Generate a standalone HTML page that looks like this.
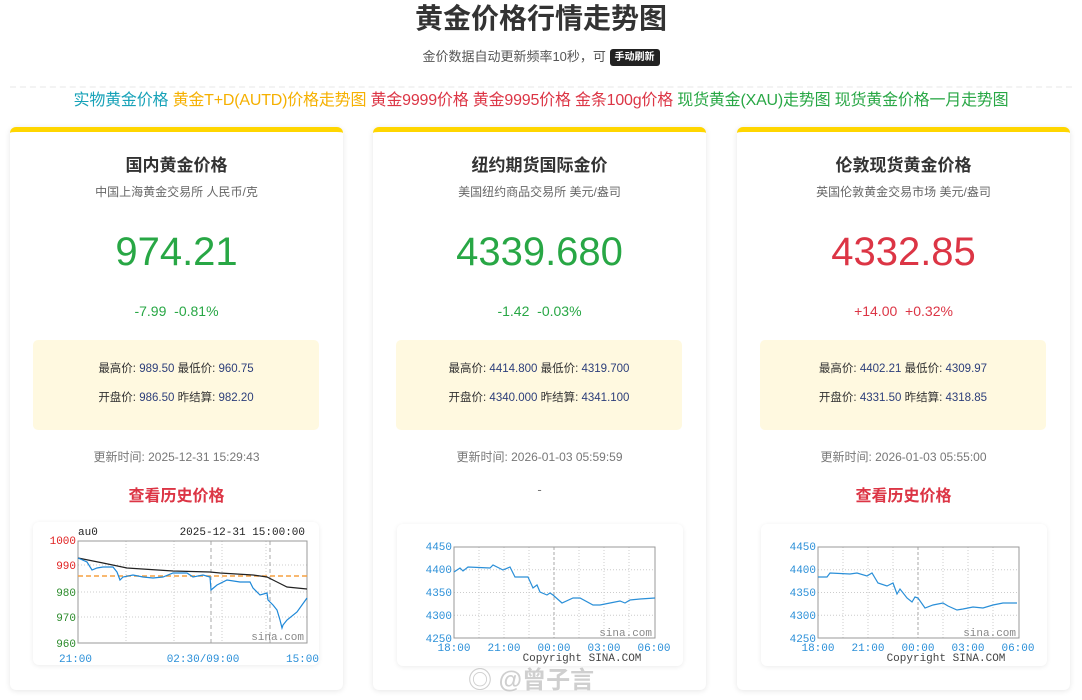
<!DOCTYPE html>
<html><head><meta charset="utf-8">
<style>
*{margin:0;padding:0;box-sizing:border-box}
body{width:1082px;height:700px;overflow:hidden;background:#fff;font-family:"Liberation Sans","Noto Sans CJK SC",sans-serif;color:#333;position:relative}
.a{position:absolute}
.c{text-align:center}
h1{position:absolute;left:0;width:1082px;top:0px;text-align:center;font-size:28px;font-weight:bold;color:#333;line-height:38px}
.sub{top:48px;left:0;width:1082px;font-size:13px;color:#555;line-height:18px}
.btn{display:inline-block;background:#222;color:#fff;font-size:10px;font-weight:bold;padding:1px 5px;border-radius:3px;line-height:15px;vertical-align:middle}
.sep{top:86px;left:10px;width:1062px;border-top:2px dashed #f3f3f3}
.links{top:90px;left:0;width:1082px;font-size:16px;line-height:22px;letter-spacing:-0.2px}
.card{top:127px;width:333px;height:563px;border-radius:6px;background:#fff;box-shadow:0 1px 6px rgba(0,0,0,.1);border-top:5px solid #ffd600;background-clip:padding-box}
.card .t{position:absolute;top:19px;width:100%;text-align:center;font-size:17px;font-weight:bold;color:#333}
.card .s{position:absolute;top:51px;width:100%;text-align:center;font-size:12px;color:#666}
.card .p{position:absolute;top:97px;width:100%;text-align:center;font-size:40px;line-height:46px}
.card .ch{position:absolute;top:171px;width:100%;text-align:center;font-size:14px}
.card .box{position:absolute;top:208px;left:23px;width:286px;height:90px;background:#fff9e0;border-radius:5px;font-size:11.5px;text-align:center;color:#333}
.box div{position:absolute;width:100%}
.box b{font-weight:normal;color:#2c3e7a}
.card .u{position:absolute;top:316px;width:100%;text-align:center;font-size:12px;color:#777}
.card .h{position:absolute;top:350px;width:100%;text-align:center;font-size:16px;font-weight:bold;color:#dc3545}
.chart{position:absolute;width:286px;height:143px;border-radius:6px;box-shadow:0 1px 5px rgba(0,0,0,.08);background:#fff}
.g{color:#28a745}.r{color:#dc3545}
svg text{font-family:"Liberation Mono",monospace}
</style></head><body>
<h1>黄金价格行情走势图</h1>
<div class="a sub c">金价数据自动更新频率10秒，可 <span class="btn">手动刷新</span></div>
<div class="a sep"></div>
<div class="a links c"><span style="color:#17a2b8">实物黄金价格</span> <span style="color:#f5b000">黄金T+D(AUTD)价格走势图</span> <span class="r">黄金9999价格</span> <span class="r">黄金9995价格</span> <span class="r">金条100g价格</span> <span class="g">现货黄金(XAU)走势图</span> <span class="g">现货黄金价格一月走势图</span></div>

<div class="a card" style="left:10px">
<div class="t">国内黄金价格</div><div class="s">中国上海黄金交易所 人民币/克</div>
<div class="p g">974.21</div><div class="ch g">-7.99&nbsp; -0.81%</div>
<div class="box"><div style="top:20px">最高价: <b>989.50</b> 最低价: <b>960.75</b></div><div style="top:49px">开盘价: <b>986.50</b> 昨结算: <b>982.20</b></div></div>
<div class="u">更新时间: 2025-12-31 15:29:43</div><div class="h">查看历史价格</div>
</div>
<div class="a card" style="left:373px">
<div class="t">纽约期货国际金价</div><div class="s">美国纽约商品交易所 美元/盎司</div>
<div class="p g">4339.680</div><div class="ch g">-1.42&nbsp; -0.03%</div>
<div class="box"><div style="top:20px">最高价: <b>4414.800</b> 最低价: <b>4319.700</b></div><div style="top:49px">开盘价: <b>4340.000</b> 昨结算: <b>4341.100</b></div></div>
<div class="u">更新时间: 2026-01-03 05:59:59</div><div class="h" style="color:#777;font-weight:normal;font-size:13px">-</div>
</div>
<div class="a card" style="left:737px">
<div class="t">伦敦现货黄金价格</div><div class="s">英国伦敦黄金交易市场 美元/盎司</div>
<div class="p r">4332.85</div><div class="ch r">+14.00&nbsp; +0.32%</div>
<div class="box"><div style="top:20px">最高价: <b>4402.21</b> 最低价: <b>4309.97</b></div><div style="top:49px">开盘价: <b>4331.50</b> 昨结算: <b>4318.85</b></div></div>
<div class="u">更新时间: 2026-01-03 05:55:00</div><div class="h">查看历史价格</div>
</div>

<div class="chart" style="left:33px;top:522px">
<svg width="286" height="143" font-size="11">
<g stroke="#ccc" stroke-dasharray="1,2">
<line x1="45" x2="274" y1="43" y2="43"/><line x1="45" x2="274" y1="70" y2="70"/><line x1="45" x2="274" y1="95" y2="95"/>
<line x1="93" x2="93" y1="19" y2="121"/><line x1="141" x2="141" y1="19" y2="121"/><line x1="189" x2="189" y1="19" y2="121"/><line x1="233" x2="233" y1="19" y2="121"/></g>
<g stroke="#aaa" stroke-dasharray="4,3"><line x1="178" x2="178" y1="19" y2="121"/><line x1="237" x2="237" y1="19" y2="121"/></g>
<rect x="45" y="19" width="229" height="102" fill="none" stroke="#999"/>
<line x1="45" x2="274" y1="54" y2="54" stroke="#f5a040" stroke-width="1.5" stroke-dasharray="5,3"/>
<polyline fill="none" stroke="#222" stroke-width="1.2" points="45,36 70,41 94,46 140,49 177,50 187,51 220,53 234,55 244,60 254,65 274,67"/>
<polyline fill="none" stroke="#1e88d8" stroke-width="1.2" points="45,36 54,40 59,48 64,46 70,45 80,45 84,50 87,58 90,55 100,53 110,55 120,56 130,55 140,51 154,51 160,55 170,53 177,55 178,68 184,63 194,58 207,60 217,60 220,66 227,73 234,71 235,78 240,83 244,88 247,98 249,106 250,103 254,98 264,90 274,76"/>
<g fill="#e02020" text-anchor="end"><text x="43" y="22">1000</text><text x="43" y="47">990</text></g>
<g fill="#2a8a2a" text-anchor="end"><text x="43" y="74">980</text><text x="43" y="99">970</text><text x="43" y="125">960</text></g>
<text x="45" y="13" fill="#222">au0</text><text x="272" y="13" fill="#222" text-anchor="end">2025-12-31 15:00:00</text>
<text x="271" y="118" fill="#888" text-anchor="end">sina.com</text>
<g fill="#2a8fd8"><text x="26" y="140">21:00</text><text x="170" y="140" text-anchor="middle">02:30/09:00</text><text x="286" y="140" text-anchor="end">15:00</text></g>
</svg></div>

<div class="chart" style="left:397px;top:524px;height:142px">
<svg width="286" height="142" font-size="11">
<g stroke="#ccc" stroke-dasharray="1,2">
<line x1="57" x2="258" y1="45.75" y2="45.75"/><line x1="57" x2="258" y1="68.5" y2="68.5"/><line x1="57" x2="258" y1="91.25" y2="91.25"/>
<line x1="82" x2="82" y1="23" y2="114"/><line x1="107" x2="107" y1="23" y2="114"/><line x1="132" x2="132" y1="23" y2="114"/><line x1="182" x2="182" y1="23" y2="114"/><line x1="207" x2="207" y1="23" y2="114"/><line x1="232" x2="232" y1="23" y2="114"/></g>
<line x1="157" x2="157" y1="23" y2="114" stroke="#aaa" stroke-dasharray="3,2"/>
<rect x="57" y="23" width="201" height="91" fill="none" stroke="#999"/>
<polyline fill="none" stroke="#2a8fd8" stroke-width="1.2" points="57,48 63,44 66,47 71,43 93,44 96,41 106,46 113,43 118,53 131,53 136,64 140,61 143,68 150,71 153,69 156,71 165,79 176,74 183,74 196,81 203,81 213,79 223,77 228,79 233,76 243,75 258,74"/>
<g fill="#2a8fd8" text-anchor="end"><text x="55" y="26">4450</text><text x="55" y="49">4400</text><text x="55" y="72">4350</text><text x="55" y="95">4300</text><text x="55" y="118">4250</text></g>
<text x="255" y="112" fill="#888" text-anchor="end">sina.com</text>
<g fill="#2a8fd8" text-anchor="middle"><text x="57" y="127">18:00</text><text x="107" y="127">21:00</text><text x="157" y="127">00:00</text><text x="207" y="127">03:00</text><text x="257" y="127">06:00</text></g>
<text x="185" y="137" fill="#444" text-anchor="middle">Copyright  SINA.COM</text>
</svg></div>

<div class="chart" style="left:761px;top:524px;height:142px">
<svg width="286" height="142" font-size="11">
<g stroke="#ccc" stroke-dasharray="1,2">
<line x1="57" x2="258" y1="45.75" y2="45.75"/><line x1="57" x2="258" y1="68.5" y2="68.5"/><line x1="57" x2="258" y1="91.25" y2="91.25"/>
<line x1="82" x2="82" y1="23" y2="114"/><line x1="107" x2="107" y1="23" y2="114"/><line x1="132" x2="132" y1="23" y2="114"/><line x1="182" x2="182" y1="23" y2="114"/><line x1="207" x2="207" y1="23" y2="114"/><line x1="232" x2="232" y1="23" y2="114"/></g>
<line x1="157" x2="157" y1="23" y2="114" stroke="#aaa" stroke-dasharray="3,2"/>
<rect x="57" y="23" width="201" height="91" fill="none" stroke="#999"/>
<polyline fill="none" stroke="#2a8fd8" stroke-width="1.2" points="57,53 66,53 69,49 89,50 96,49 106,52 111,49 117,59 126,62 132,59 136,70 139,65 146,74 151,78 154,73 157,74 164,84 172,81 182,79 187,82 196,86 202,85 212,83 222,84 232,81 242,79 256,79"/>
<g fill="#2a8fd8" text-anchor="end"><text x="55" y="26">4450</text><text x="55" y="49">4400</text><text x="55" y="72">4350</text><text x="55" y="95">4300</text><text x="55" y="118">4250</text></g>
<text x="255" y="112" fill="#888" text-anchor="end">sina.com</text>
<g fill="#2a8fd8" text-anchor="middle"><text x="57" y="127">18:00</text><text x="107" y="127">21:00</text><text x="157" y="127">00:00</text><text x="207" y="127">03:00</text><text x="257" y="127">06:00</text></g>
<text x="185" y="137" fill="#444" text-anchor="middle">Copyright  SINA.COM</text>
</svg></div>

<div class="a" style="left:468px;top:660px;font-size:24px;color:rgba(160,160,160,.5);font-weight:bold;text-shadow:0 0 2px #fff">◎ @曾子言</div>
</body></html>
